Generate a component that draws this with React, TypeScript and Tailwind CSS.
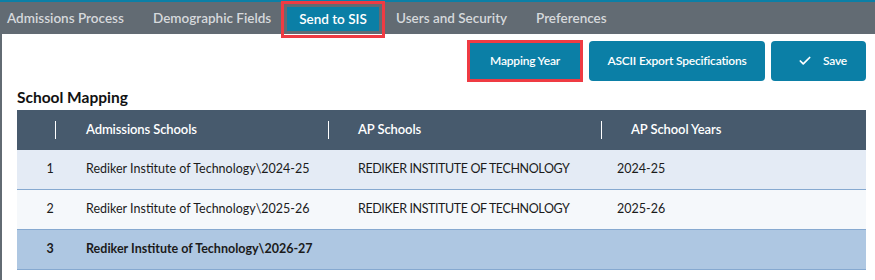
import { Check } from 'lucide-react';

const rows = [
    { n: '1', school: 'Rediker Institute of Technology\\2024-25', ap: 'REDIKER INSTITUTE OF TECHNOLOGY', year: '2024-25', bg: 'bg-[#e4ebf5]', bold: false },
    { n: '2', school: 'Rediker Institute of Technology\\2025-26', ap: 'REDIKER INSTITUTE OF TECHNOLOGY', year: '2025-26', bg: 'bg-[#f5f8fb]', bold: false },
    { n: '3', school: 'Rediker Institute of Technology\\2026-27', ap: '', year: '', bg: 'bg-[#aec7e2]', bold: true },
];

const App = () => {
    return (
        <div className="w-[875px] h-[280px] overflow-hidden bg-white font-['Lato',sans-serif] text-[#1b1b1b]">
            <div className="h-[34px] bg-[#626b73] border-t-2 border-[#0b7fa6] flex items-center text-[13.5px] font-semibold text-[#d6d9dc]">
                <span className="ml-[7px] w-[146px]">Admissions Process</span>
                <span className="w-[128px]">Demographic Fields</span>
                <div className="border-[3px] border-[#ef3b43] h-[37px] mt-[3px] w-[104px] flex items-stretch px-[3px] pt-[3px] pb-[4px]">
                    <span className="flex-1 bg-[#0b7fa6] text-white flex items-center justify-center">Send to SIS</span>
                </div>
                <span className="ml-[11px] w-[140px]">Users and Security</span>
                <span>Preferences</span>
            </div>
            <div className="border-l-2 border-[#626b73] h-[246px] pl-[15px] pr-[9px]">
                <div className="flex justify-end gap-[6px] pt-[6px] text-[12px] font-semibold tracking-[-0.2px] text-white">
                    <div className="border-[3px] border-[#ef3b43]">
                        <button className="h-[36px] w-[110px] bg-[#0b7fa6]">Mapping Year</button>
                    </div>
                    <button className="h-[40px] w-[176px] mt-[1px] rounded-[4px] bg-[#0b7fa6]">ASCII Export Specifications</button>
                    <button className="h-[40px] w-[95px] mt-[1px] pl-[8px] rounded-[4px] bg-[#0b7fa6] flex items-center justify-center gap-[11px]">
                        <Check size={14} strokeWidth={3} />
                        Save
                    </button>
                </div>
                <h2 className="mt-[2px] text-[15.5px] font-bold leading-[26px] text-[#111]">School Mapping</h2>
                <div className="text-[12.5px]">
                    <div className="h-[40px] bg-[#475a6d] flex items-center text-white font-semibold text-[13px] tracking-[-0.1px]">
                        <div className="w-[38px]" />
                        <div className="w-px h-[18px] bg-white" />
                        <div className="w-[272px] pl-[30px]">Admissions Schools</div>
                        <div className="w-px h-[18px] bg-white" />
                        <div className="w-[272px] pl-[29px]">AP Schools</div>
                        <div className="w-px h-[18px] bg-white" />
                        <div className="pl-[29px]">AP School Years</div>
                    </div>
                    {rows.map((row) => (
                        <div key={row.n} className={`h-[40px] flex items-center border-b border-[#86a9d0] ${row.bg} ${row.bold ? 'font-bold' : ''}`}>
                            <div className="w-[66px] text-center">{row.n}</div>
                            <div className="w-[275px] pl-[3px]">{row.school}</div>
                            <div className="w-[259px] tracking-[-0.4px]">{row.ap}</div>
                            <div>{row.year}</div>
                        </div>
                    ))}
                </div>
            </div>
        </div>
    );
};

export default App;
